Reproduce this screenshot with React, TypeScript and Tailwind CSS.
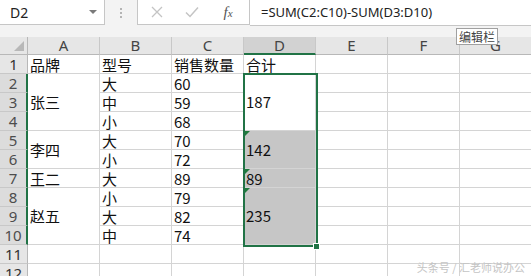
import type { ReactNode } from "react";

const COL = ["", "col-start-1", "col-start-2", "col-start-3", "col-start-4", "col-start-5", "col-start-6", "col-start-7", "col-start-8"];
const ROW = ["", "row-start-1", "row-start-2", "row-start-3", "row-start-4", "row-start-5", "row-start-6", "row-start-7", "row-start-8", "row-start-9", "row-start-10", "row-start-11", "row-start-12", "row-start-13"];
const SPAN = ["", "row-span-1", "row-span-2", "row-span-3"];

type CellData = { r: number; span?: number; text?: string; gray?: boolean; flag?: boolean };

// row numbers are sheet rows (1..12); grid row = sheet row + 1
const columns: CellData[][] = [
  [
    { r: 1, text: "品牌" },
    { r: 2, span: 3, text: "张三" },
    { r: 5, span: 2, text: "李四" },
    { r: 7, text: "王二" },
    { r: 8, span: 3, text: "赵五" },
    { r: 11 },
    { r: 12 },
  ],
  ["型号", "大", "中", "小", "大", "小", "大", "小", "大", "中", "", ""].map((t, i) => ({ r: i + 1, text: t })),
  ["销售数量", "60", "59", "68", "70", "72", "89", "79", "82", "74", "", ""].map((t, i) => ({ r: i + 1, text: t })),
  [
    { r: 1, text: "合计" },
    { r: 2, span: 3, text: "187" },
    { r: 5, span: 2, text: "142", gray: true, flag: true },
    { r: 7, text: "89", gray: true, flag: true },
    { r: 8, span: 3, text: "235", gray: true, flag: true },
    { r: 11 },
    { r: 12 },
  ],
];

const Cell = ({ c, d }: { c: number; d: CellData }) => {
  const span = d.span ?? 1;
  return (
    <div
      className={`${COL[c]} ${ROW[d.r + 1]} ${SPAN[span]} relative flex ${span > 1 ? "items-center" : "items-end"} pl-[2px] border-r border-b border-[#d4d4d4] ${d.gray ? "bg-[#c6c6c6]" : "bg-white"} text-[15px] leading-[16px] text-[#111] whitespace-nowrap`}
    >
      {d.flag && (
        <span className="absolute left-0 top-0 w-0 h-0 border-t-[6px] border-r-[6px] border-t-[#1f7a3c] border-r-transparent" />
      )}
      {d.text}
    </div>
  );
};

const ColHead = ({ c, label, active }: { c: number; label: string; active?: boolean }) => (
  <div
    className={`${COL[c]} row-start-1 flex items-center justify-center border-r border-[#c8c8c8] text-[15px] leading-none text-[#444] ${active ? "bg-[#d2d2d2] border-b-2 border-b-[#217346]" : "bg-[#e6e6e6] border-b border-b-[#b8b8b8]"}`}
    style={{ fontFamily: '"Noto Sans", sans-serif' }}
  >
    {label}
  </div>
);

const RowHead = ({ n }: { n: number }) => {
  const sel = n >= 2 && n <= 10;
  return (
    <div
      className={`col-start-1 ${ROW[n + 1]} flex items-center justify-center border-b border-[#c8c8c8] text-[15px] leading-none ${sel ? "bg-[#dcdcdc] border-r-2 border-r-[#217346] text-[#4d4d4d]" : "bg-[#e6e6e6] border-r border-r-[#b8b8b8] text-[#333]"}`}
      style={{ fontFamily: '"Noto Sans", sans-serif' }}
    >
      {n}
    </div>
  );
};

const Icon = ({ children, className }: { children: ReactNode; className?: string }) => (
  <span className={`flex items-center justify-center ${className ?? ""}`}>{children}</span>
);

export default function App() {
  return (
    <div
      className="relative w-[531px] h-[276px] overflow-hidden bg-[#f3f3f3]"
      style={{ fontFamily: '"Noto Sans CJK SC", "Noto Sans", sans-serif' }}
    >
      {/* formula bar */}
      <div className="flex h-[37px] items-start">
        <div className="flex h-[25px] w-[105px] items-center justify-between border-r border-b border-[#c6c6c6] bg-white pl-[10px] pr-[7px]">
          <span className="text-[14px] text-[#222]" style={{ fontFamily: '"Noto Sans", sans-serif' }}>D2</span>
          <span className="w-0 h-0 border-l-[4px] border-r-[4px] border-t-[4px] border-l-transparent border-r-transparent border-t-[#7a7a7a]" />
        </div>
        <div className="flex h-[25px] w-[32px] items-center justify-center">
          <span className="flex flex-col gap-[2px]">
            <span className="w-[2px] h-[2px] bg-[#b4b4b4]" />
            <span className="w-[2px] h-[2px] bg-[#b4b4b4]" />
            <span className="w-[2px] h-[2px] bg-[#b4b4b4]" />
          </span>
        </div>
        <div className="flex h-[25px] w-[113px] items-center border-l border-r border-b border-[#c6c6c6] bg-white">
          <Icon className="w-[36px] ml-[1px]">
            <svg width="12" height="12" viewBox="0 0 12 12">
              <path d="M1 1 L11 11 M11 1 L1 11" stroke="#c4c4c4" strokeWidth="1.3" fill="none" />
            </svg>
          </Icon>
          <Icon className="w-[34px]">
            <svg width="14" height="12" viewBox="0 0 14 12">
              <path d="M1 6.5 L5 10.5 L13 1.5" stroke="#c4c4c4" strokeWidth="1.5" fill="none" />
            </svg>
          </Icon>
          <Icon className="w-[38px]">
            <span className="text-[15px] italic text-[#555]" style={{ fontFamily: '"Liberation Serif", serif' }}>
              f<span className="text-[11px]">x</span>
            </span>
          </Icon>
        </div>
        <div className="flex h-[26px] flex-1 items-center border-b border-[#c6c6c6] bg-white pl-[11px]">
          <span className="text-[13px] text-[#222]" style={{ fontFamily: '"Noto Sans", sans-serif' }}>
            =SUM(C2:C10)-SUM(D3:D10)
          </span>
        </div>
      </div>

      {/* sheet */}
      <div className="grid grid-cols-[28px_repeat(7,72px)] grid-rows-[18px_repeat(12,19px)]">
        <div className="col-start-1 row-start-1 relative bg-[#e6e6e6] border-r border-b border-[#b8b8b8]">
          <span className="absolute right-[3px] bottom-[3px] w-0 h-0 border-b-[10px] border-l-[10px] border-b-[#b8b8b8] border-l-transparent" />
        </div>
        {["A", "B", "C", "D", "E", "F", "G"].map((l, i) => (
          <ColHead key={l} c={i + 2} label={l} active={l === "D"} />
        ))}
        {Array.from({ length: 12 }, (_, i) => (
          <RowHead key={i} n={i + 1} />
        ))}
        {columns.map((col, ci) => col.map((d) => <Cell key={`${ci}-${d.r}`} c={ci + 2} d={d} />))}
        {[6, 7, 8].map((c) =>
          Array.from({ length: 12 }, (_, i) => <Cell key={`${c}-${i}`} c={c} d={{ r: i + 1 }} />)
        )}
      </div>

      {/* selection outline D2:D10 */}
      <div className="absolute left-[243px] top-[73px] w-[75px] h-[174px] border-2 border-[#217346] pointer-events-none" />
      <div className="absolute left-[313px] top-[243px] w-[7px] h-[7px] bg-[#217346] border border-white" />

      {/* tooltip */}
      <div className="absolute left-[456px] top-[28px] h-[17px] px-[2px] flex items-center border border-[#a0a0a0] bg-white text-[12px] leading-none text-[#444]">
        编辑栏
      </div>

      {/* watermark */}
      <div className="absolute right-[6px] bottom-[1px] text-[11px] text-[#c4c4c4]">头条号 / 汇老师说办公</div>
    </div>
  );
}
